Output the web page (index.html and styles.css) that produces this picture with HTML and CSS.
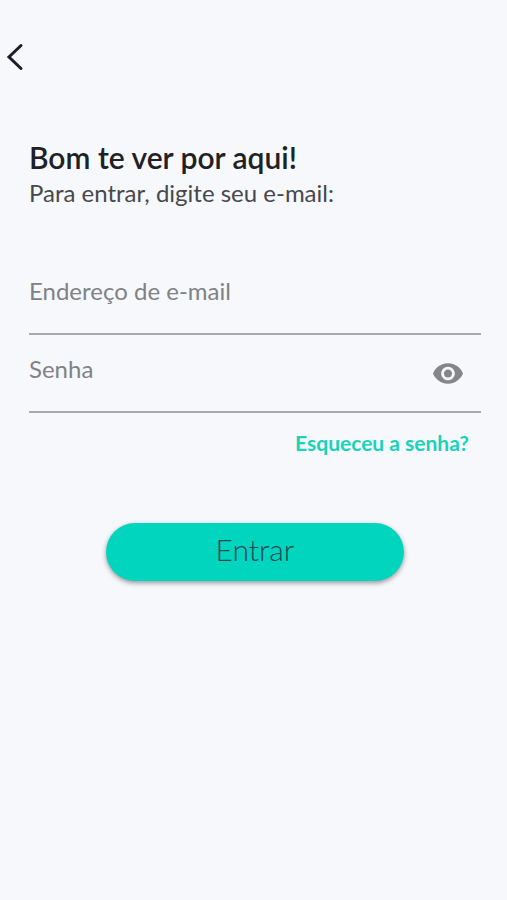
FILE: index.html
```html
<!DOCTYPE html>
<html lang="pt-BR">
<head>
<meta charset="utf-8">
<meta name="viewport" content="width=device-width, initial-scale=1">
<title>Entrar</title>
<link rel="stylesheet" href="styles.css">
</head>
<body>
<header class="topbar">
  <button class="back" type="button" aria-label="Voltar">
    <svg viewBox="0 0 18 28" width="18" height="28" aria-hidden="true"><path d="M15 2.500 3 14l12 11.500"/></svg>
  </button>
</header>
<main class="login">
  <h1 class="title">Bom te ver por aqui!</h1>
  <p class="subtitle">Para entrar, digite seu e-mail:</p>
  <form class="form">
    <div class="field">
      <input class="input" type="email" placeholder="Endereço de e-mail" aria-label="Endereço de e-mail">
    </div>
    <div class="field">
      <input class="input" type="password" placeholder="Senha" aria-label="Senha">
      <button class="reveal" type="button" aria-label="Mostrar senha">
        <svg viewBox="1 4.500 22 15" width="30" height="21" aria-hidden="true"><path d="M12 4.500C7 4.500 2.730 7.610 1 12c1.730 4.390 6 7.500 11 7.500s9.270-3.110 11-7.500c-1.730-4.390-6-7.500-11-7.500zM12 17c-2.760 0-5-2.240-5-5s2.240-5 5-5 5 2.240 5 5-2.240 5-5 5zm0-8c-1.660 0-3 1.340-3 3s1.340 3 3 3 3-1.340 3-3-1.340-3-3-3z"/></svg>
      </button>
    </div>
    <a class="forgot" href="#">Esqueceu a senha?</a>
    <button class="submit" type="submit">Entrar</button>
  </form>
</main>
</body>
</html>
```
FILE: styles.css
```css
* {
  box-sizing: border-box;
}

body {
  margin: 0;
  min-height: 100vh;
  background: #f6f8fc;
  color: #202124;
  font-family: Lato, "Noto Sans", sans-serif;
}

button {
  border: 0;
  padding: 0;
  background: none;
  font: inherit;
  cursor: pointer;
}

svg {
  display: block;
}

.topbar {
  padding: 43px 6px 0;
}

.back svg {
  fill: none;
  stroke: #1c1d26;
  stroke-width: 3;
  stroke-linecap: round;
}

.login {
  padding: 65px 26px 0 29px;
}

.title {
  margin: 0;
  font-size: 30px;
  line-height: 36px;
  font-weight: 600;
}

.subtitle {
  margin: 0;
  font-size: 24px;
  line-height: 36px;
  color: #47484b;
}

.form {
  display: flex;
  flex-direction: column;
  padding-top: 46px;
}

.field {
  display: flex;
  align-items: center;
  height: 78px;
  border-bottom: 2px solid #a9aaae;
}

.input {
  flex: 1;
  min-width: 0;
  height: 60px;
  padding: 0 0 10px;
  border: 0;
  outline: 0;
  background: none;
  color: #202124;
  font: inherit;
  font-size: 24px;
}

.input::placeholder {
  color: #818285;
  opacity: 1;
}

.reveal {
  margin-right: 18px;
}

.reveal svg {
  fill: #858688;
}

.forgot {
  align-self: flex-end;
  margin: 16px 12px 0 0;
  color: #19d3b9;
  font-size: 21px;
  line-height: 28px;
  font-weight: 700;
  text-decoration: none;
}

.submit {
  align-self: center;
  width: 66%;
  height: 58px;
  margin-top: 66px;
  padding-bottom: 6px;
  border-radius: 29px;
  background: #02d5be;
  color: #174653;
  font-size: 30px;
  font-weight: 300;
  box-shadow: 0 2px 5px rgba(0, 0, 0, 0.4);
}
```
